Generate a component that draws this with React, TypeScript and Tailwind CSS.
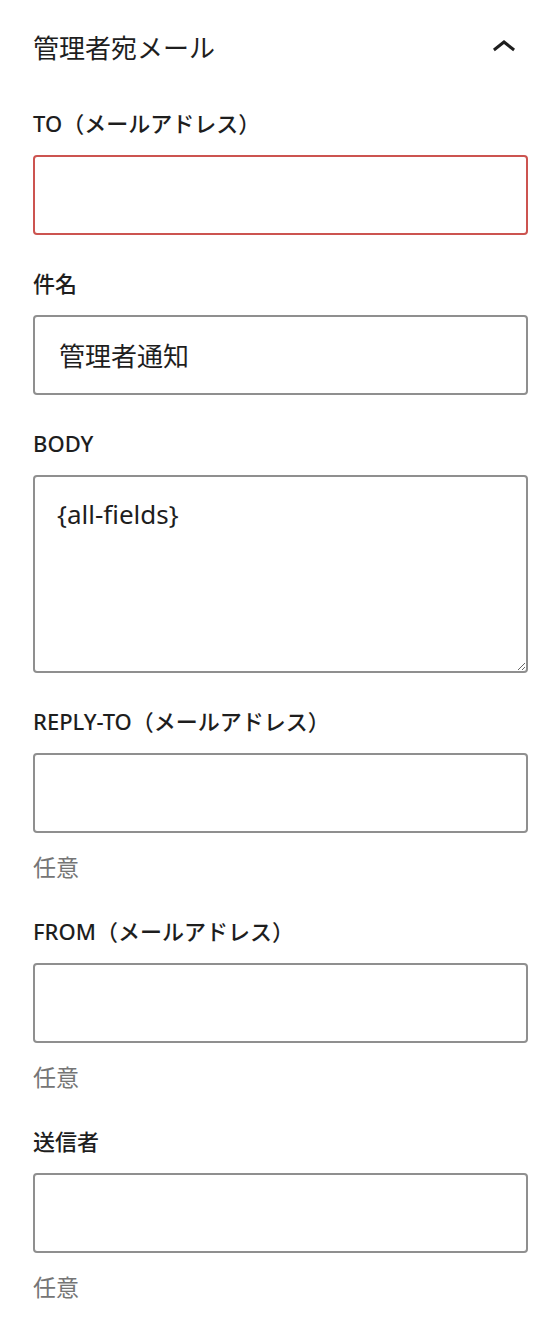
const font = {
  fontFamily: '"Noto Sans", "Noto Sans CJK JP", sans-serif',
};

interface FieldProps {
  label: string;
  value?: string;
  help?: string;
  error?: boolean;
}

const Field = ({ label, value, help, error }: FieldProps) => (
  <div className="mb-8">
    <label className="mb-4 block text-[22px] font-medium leading-[32px] text-[#1e1e1e]">
      {label}
    </label>
    <input
      type="text"
      defaultValue={value}
      className={`block h-[80px] w-full rounded-[4px] border-2 bg-white px-6 text-[26px] text-[#1e1e1e] outline-none ${
        error ? "border-[#cc5450]" : "border-[#8f8f8f]"
      }`}
    />
    {help && (
      <p className="mt-[18px] text-[23px] leading-[32px] text-[#757575]">
        {help}
      </p>
    )}
  </div>
);

export default function App() {
  return (
    <div className="min-h-[1320px] bg-white pl-[33px] pr-[28px]" style={font}>
      <div className="mt-6 flex h-12 items-center justify-between">
        <h2 className="text-[26px] font-normal leading-[32px] text-[#1e1e1e]">
          管理者宛メール
        </h2>
        <svg width="48" height="48" viewBox="0 0 24 24" className="fill-[#1e1e1e]">
          <path d="M6.5 12.4L12 8l5.5 4.4-.9 1.2L12 10l-4.6 3.6-.9-1.2z" />
        </svg>
      </div>

      <div className="mt-[35px]">
        <Field label="TO（メールアドレス）" error />
        <Field label="件名" value="管理者通知" />

        <div className="mb-8">
          <label className="mb-4 block text-[22px] font-medium leading-[32px] text-[#1e1e1e]">
            BODY
          </label>
          <textarea
            defaultValue="{all-fields}"
            className="block h-[198px] w-full rounded-[4px] border-2 border-[#8f8f8f] bg-white px-[22px] pt-[21px] text-[26px] leading-[32px] text-[#1e1e1e] outline-none"
          />
        </div>

        <Field label="REPLY-TO（メールアドレス）" help="任意" />
        <Field label="FROM（メールアドレス）" help="任意" />
        <Field label="送信者" help="任意" />
      </div>
    </div>
  );
}
